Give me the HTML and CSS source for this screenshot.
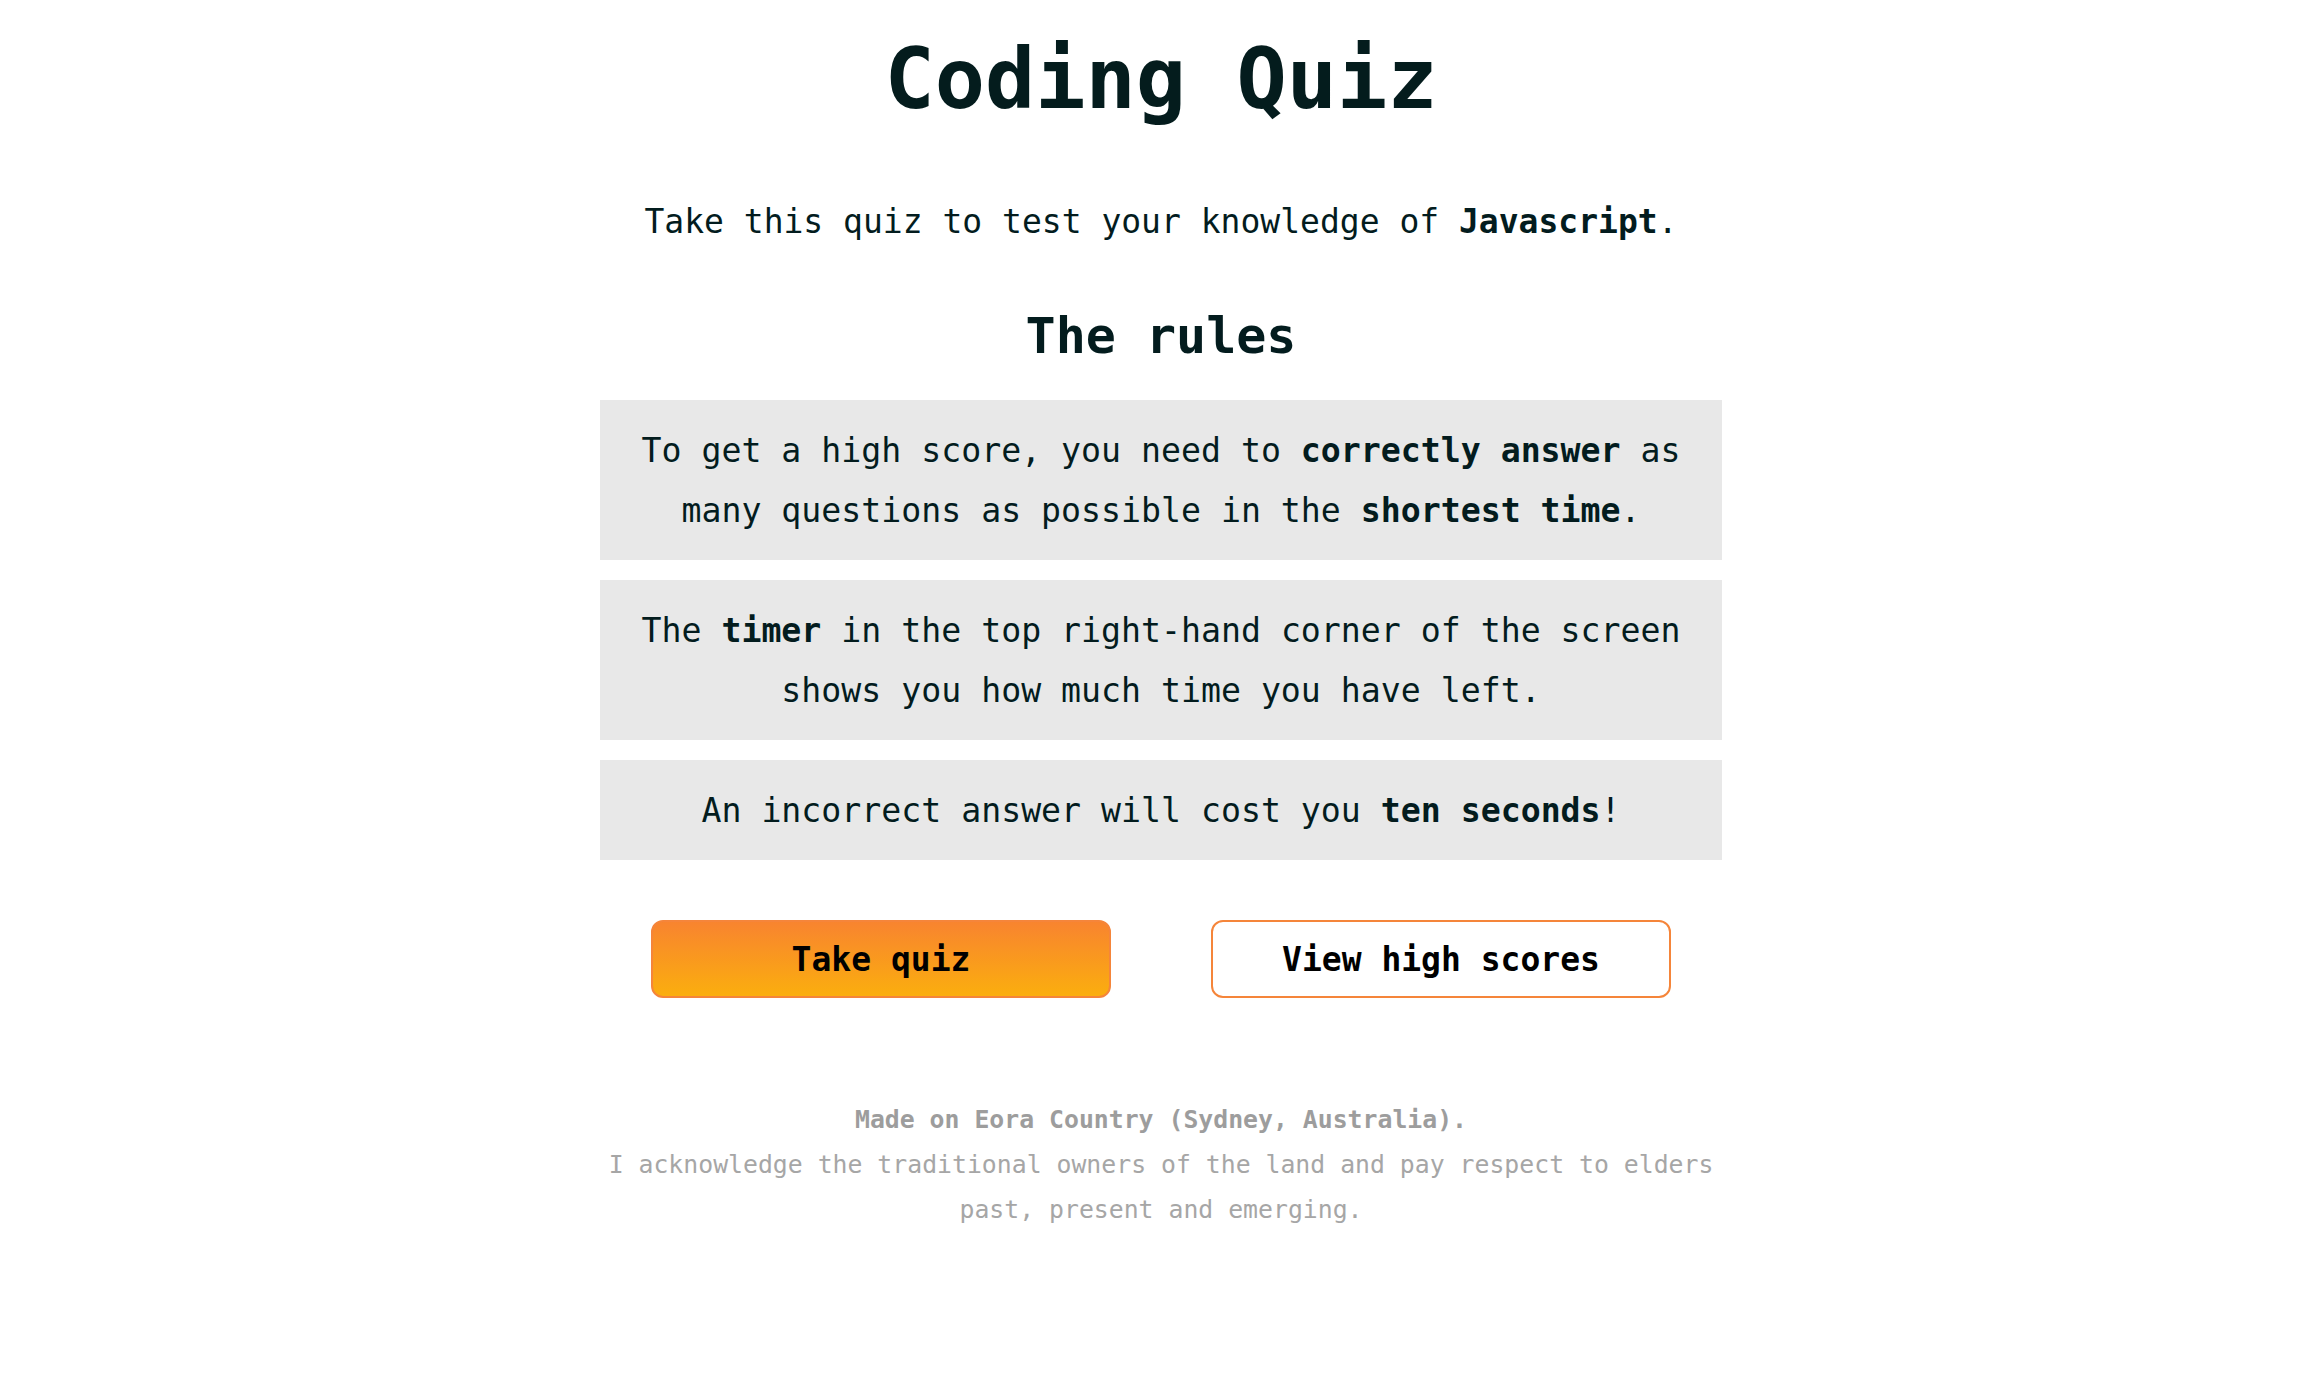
FILE: index.html
```html
<!DOCTYPE html>
<html lang="en">
<head>
<meta charset="utf-8">
<title>Coding Quiz</title>
<link rel="stylesheet" href="styles.css">
</head>
<body>
<main class="page">
  <h1 class="title">Coding Quiz</h1>
  <p class="intro">Take this quiz to test your knowledge of <strong>Javascript</strong>.</p>
  <h2 class="rules-title">The rules</h2>
  <div class="rules">
    <p class="rule">To get a high score, you need to <strong>correctly answer</strong> as many questions as possible in the <strong>shortest time</strong>.</p>
    <p class="rule">The <strong>timer</strong> in the top right-hand corner of the screen shows you how much time you have left.</p>
    <p class="rule">An incorrect answer will cost you <strong>ten seconds</strong>!</p>
  </div>
  <div class="actions">
    <button class="btn btn-primary" type="button">Take quiz</button>
    <button class="btn btn-secondary" type="button">View high scores</button>
  </div>
  <footer class="footer">
    <p class="footer-strong">Made on Eora Country (Sydney, Australia).</p>
    <p class="footer-text">I acknowledge the traditional owners of the land and pay respect to elders past, present and emerging.</p>
  </footer>
</main>
</body>
</html>
```

FILE: styles.css
```css
html, body {
  margin: 0;
  padding: 0;
  background: #ffffff;
}

body {
  font-family: "DejaVu Sans Mono", "Liberation Mono", monospace;
  color: #031c1e;
}

.page {
  width: 1122px;
  margin: 0 auto;
  padding-top: 29px;
  text-align: center;
}

.title {
  margin: 0;
  font-size: 83.5px;
  line-height: 100px;
  font-weight: bold;
  color: #041c1d;
}

.intro {
  margin: 68px 0 0;
  font-size: 33px;
  line-height: 50px;
}

.intro strong,
.rule strong {
  font-weight: bold;
}

.rules-title {
  margin: 59px 0 0;
  font-size: 50px;
  line-height: 60px;
  font-weight: bold;
}

.rules {
  margin-top: 34px;
  display: flex;
  flex-direction: column;
  gap: 20px;
}

.rule {
  margin: 0;
  background: #e8e8e8;
  padding: 21px 22px 19px;
  font-size: 33.2px;
  line-height: 60px;
}

.actions {
  margin-top: 60px;
  display: flex;
  justify-content: center;
  gap: 100px;
}

.btn {
  width: 460px;
  height: 78px;
  box-sizing: border-box;
  border: 2px solid #f5853a;
  border-radius: 12px;
  font-family: "DejaVu Sans Mono", "Liberation Mono", monospace;
  font-size: 33px;
  font-weight: bold;
  color: #000000;
  padding: 0;
  display: flex;
  align-items: center;
  justify-content: center;
  cursor: pointer;
}

.btn-primary {
  background: linear-gradient(to bottom, #f8842f, #fbae0e);
}

.btn-secondary {
  background: #ffffff;
}

.footer {
  margin-top: 99px;
  color: #9d9d9d;
  font-size: 24.8px;
  line-height: 45px;
}

.footer p {
  margin: 0;
}

.footer-strong {
  font-weight: bold;
}

.footer-text {
  color: #a6a6a6;
}
```
